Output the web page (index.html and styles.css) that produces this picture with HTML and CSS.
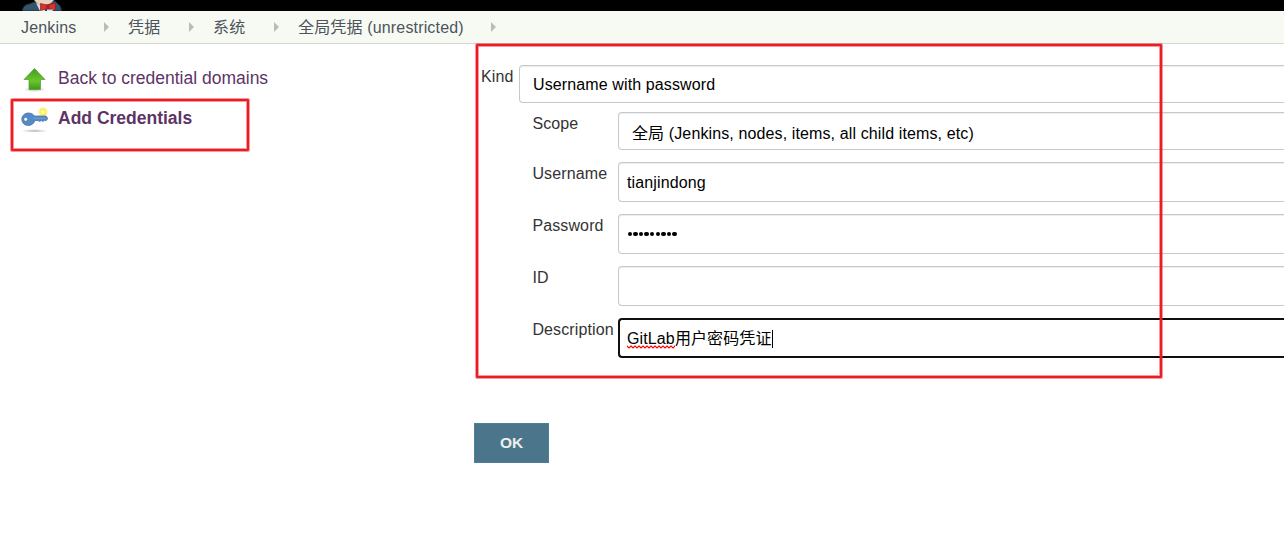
FILE: index.html
```html
<!DOCTYPE html>
<html lang="zh-CN">
<head>
<meta charset="utf-8">
<title>Add Credentials [Jenkins]</title>
<link rel="stylesheet" href="styles.css">
</head>
<body>
<header class="header">
  <svg class="mascot" width="48" height="11" viewBox="0 0 48 11">
    <path d="M2.5 11C2.5 7 5 4.5 9 4L17 1H35C37 4 41 4 41.5 11Z" fill="#35546c" stroke="#1c2a35"/>
    <path d="M14 0H34L31 3L25 6L18 4Z" fill="#e9d2bc"/>
    <path d="M20 11L16 3L25 7V11Z" fill="#d9dde0"/>
    <path d="M20.5 3.5L27 5L35.5 3V10L28 8.500L20.500 10.500Z" fill="#d93030" stroke="#8b1c1c" stroke-width=".7"/>
    <path d="M26 4.500H29.500V9H26Z" fill="#ac2020"/>
    <path d="M27 9.500L34 9.500L32 11H27Z" fill="#ddd"/>
  </svg>
</header>
<nav class="crumbs">
  <span class="crumb c1">Jenkins</span><i class="arrow"></i>
  <span class="crumb c2">凭据</span><i class="arrow"></i>
  <span class="crumb c2">系统</span><i class="arrow"></i>
  <span class="crumb c4">全局凭据 (unrestricted)</span><i class="arrow"></i>
</nav>
<div class="page">
  <aside class="side">
    <a class="task">
      <svg width="28" height="28" viewBox="0 0 28 28">
        <defs>
          <linearGradient id="green" x1="0" y1="0" x2="0" y2="1"><stop offset="0" stop-color="#3f9f18"/><stop offset=".6" stop-color="#6cc52c"/><stop offset="1" stop-color="#3c9a16"/></linearGradient>
          <radialGradient id="shade"><stop offset="0" stop-color="#888" stop-opacity=".6"/><stop offset="1" stop-color="#888" stop-opacity="0"/></radialGradient>
        </defs>
        <ellipse cx="14.5" cy="25.5" rx="11" ry="2.5" fill="url(#shade)"/>
        <path d="M14.5 4.500L25 15.500H20.500V25.500H9V15.500H4Z" fill="url(#green)" stroke="#5aa340" stroke-width=".8" stroke-linejoin="round"/>
      </svg>
      <span>Back to credential domains</span>
    </a>
    <a class="task active">
      <svg width="28" height="28" viewBox="0 0 28 28">
        <defs><radialGradient id="glow"><stop offset="0" stop-color="#fffbd0"/><stop offset=".35" stop-color="#fff68f"/><stop offset=".6" stop-color="#ffec48"/><stop offset="1" stop-color="#fff27a" stop-opacity=".3"/></radialGradient></defs>
        <ellipse cx="14.500" cy="27" rx="13" ry="2" fill="url(#shade)"/>
        <circle cx="23" cy="8" r="5" fill="url(#glow)"/>
        <path transform="translate(.5 1.500)" fill-rule="evenodd" d="M8 7.500C11 7.500 13 9 14 10.500H25.500L27.400 13L25.500 15.300L24 14.800L22.500 16L21 15L19 16L17.500 15H14.500C13.500 18 11 20 7.800 20C4 20 1.300 17.200 1.300 13.800C1.300 10.200 4.200 7.500 8 7.500ZM5.200 11.800A2 2 0 1 0 5.200 15.800A2 2 0 1 0 5.200 11.800Z" fill="#548ac5" stroke="#4677ae" stroke-width=".8"/>
        <path d="M13.500 14.200H25.500" stroke="#76a2d0"/>
      </svg>
      <span>Add Credentials</span>
    </a>
  </aside>
  <main class="main">
    <form class="form">
      <label class="kind-label">Kind</label>
      <div class="field select kind">Username with password</div>
      <div class="rows">
        <label>Scope</label><div class="field select scope">全局 (Jenkins, nodes, items, all child items, etc)</div>
        <label>Username</label><div class="field">tianjindong</div>
        <label>Password</label><div class="field password"><span class="dots"><i></i><i></i><i></i><i></i><i></i><i></i><i></i><i></i><i></i></span></div>
        <label>ID</label><div class="field"></div>
        <label>Description</label><div class="field focused"><span class="typo">GitLab<svg class="squiggle" width="48" height="4" viewBox="0 0 48 4"><defs><pattern id="wave" width="4" height="4" patternUnits="userSpaceOnUse"><path d="M-1 .3L0 1L2 3L4 1L5 .3" fill="none" stroke="#f00" stroke-width="1.1"/></pattern></defs><rect width="48" height="4" fill="url(#wave)"/></svg></span>用户密码凭证<i class="caret"></i></div>
      </div>
    </form>
    <button class="ok" type="button">OK</button>
  </main>
</div>
<div class="mark mark-side"></div>
<div class="mark mark-form"></div>
</body>
</html>
```
FILE: styles.css
```css
* { box-sizing: border-box; }
body {
  margin: 0;
  height: 537px;
  overflow: hidden;
  position: relative;
  background: #fff;
  color: #333;
  font: 16px/20px "Liberation Sans", "Noto Sans CJK SC", sans-serif;
}
.header { height: 11px; background: #000; padding-left: 20px; }
.mascot { display: block; }
.crumbs {
  display: flex;
  align-items: center;
  height: 33px;
  background: #f6faf2;
  border-bottom: 1px solid #d3d7cf;
  padding-left: 21px;
  color: #4d545d;
  letter-spacing: .16px;
  white-space: nowrap;
}
.crumb { flex: none; height: 20px; line-height: 22px; }
.c1 { width: 83px; }
.c2 { width: 61px; }
.c4 { width: 193px; }
.arrow {
  flex: none;
  width: 5px;
  height: 10px;
  margin-right: 19px;
  background: #babdb6;
  clip-path: polygon(0 0, 100% 50%, 0 100%);
}
.page { display: flex; }
.side { width: 474px; flex: none; padding: 20px 0 0 20px; }
.task {
  display: flex;
  gap: 10px;
  height: 40px;
  color: #5c3566;
  font-size: 17.5px;
  line-height: 28px;
  white-space: nowrap;
}
.active { font-weight: bold; }
.main { flex: 1; min-width: 0; }
.form {
  display: grid;
  grid-template-columns: 38px minmax(0, 1fr);
  padding: 21px 0 0 7px;
  letter-spacing: .12px;
}
.kind-label { padding-top: 2px; }
.field {
  display: flex;
  align-items: center;
  height: 40px;
  border: 1px solid #c8c8c8;
  border-right: 0;
  border-radius: 4px 0 0 4px;
  padding: 2px 8px 0;
  background: #fff;
  box-shadow: inset 0 1px 1px rgba(0, 0, 0, .075);
  color: #000;
  white-space: nowrap;
}
.select { height: 38px; padding-left: 13px; }
.scope { padding-top: 6px; }
.rows {
  grid-column: 2;
  display: grid;
  grid-template-columns: 86px minmax(0, 1fr);
  row-gap: 12px;
  padding: 9px 0 0 13px;
}
.rows label { padding: 2px 0 0 .4px; white-space: nowrap; }
.password { padding-top: 0; }
.focused { border: 2px solid #101010; border-right: 0; padding-left: 7px; box-shadow: none; }
.typo { position: relative; }
.squiggle { position: absolute; left: 0; top: 16px; }
.caret { width: 1px; height: 18px; background: #000; }
.dots { display: flex; gap: 1.2px; padding-left: .7px; }
.dots i { width: 4.4px; height: 4.4px; border-radius: 50%; background: #000; }
.ok {
  display: block;
  margin: 65px 0 0;
  width: 75px;
  height: 40px;
  border: 1px solid #4d7f99;
  background: #4b758b;
  color: #eee;
  font: bold 15.500px/20px "Liberation Sans", sans-serif;
  padding: 0;
}
.mark {
  position: absolute;
  border: 2px solid #ed1c24;
  box-shadow: 0 0 0 1px rgba(237, 28, 36, .45), inset 0 0 0 1px rgba(237, 28, 36, .45);
  border-radius: 1px;
  pointer-events: none;
}
.mark-side { left: 11px; top: 99px; width: 238px; height: 52px; }
.mark-form { left: 476px; top: 44px; width: 686px; height: 334px; }
```
